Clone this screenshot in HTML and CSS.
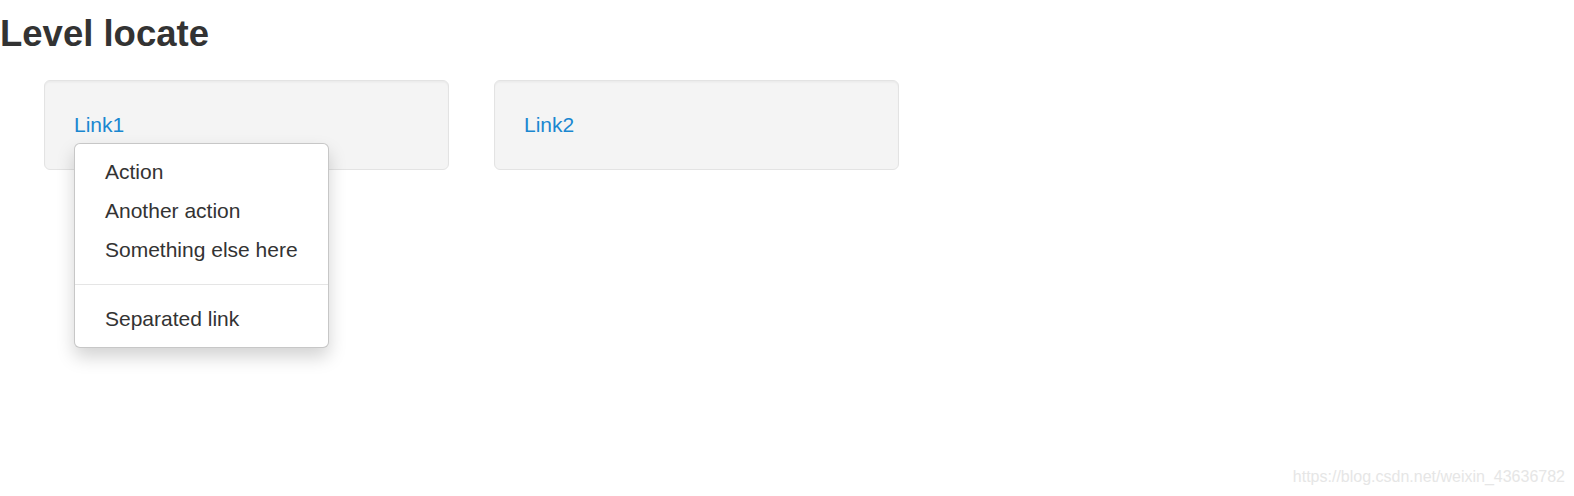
FILE: index.html
```html
<!DOCTYPE html>
<html>
<head>
<meta charset="utf-8">
<link rel="stylesheet" href="styles.css">
</head>
<body>
<h3 class="title">Level locate</h3>
<div class="row">
  <div class="well">
    <div class="dropdown">
      <a class="link" href="#">Link1</a>
      <ul class="menu">
        <li><a href="#">Action</a></li>
        <li><a href="#">Another action</a></li>
        <li><a href="#">Something else here</a></li>
        <li class="divider"></li>
        <li><a href="#">Separated link</a></li>
      </ul>
    </div>
  </div>
  <div class="well">
    <a class="link" href="#">Link2</a>
  </div>
</div>
<div class="watermark">https://blog.csdn.net/weixin_43636782</div>
</body>
</html>
```

FILE: styles.css
```css
html, body {
  margin: 0;
  padding: 0;
  background: #fff;
}
body {
  font-family: "Liberation Sans", Arial, sans-serif;
  font-size: 21px;
  line-height: 30px;
  color: #333;
  position: relative;
  width: 1574px;
  height: 496px;
  overflow: hidden;
}
.title {
  margin: 14px 0 0 0;
  font-size: 36.5px;
  line-height: 40px;
  font-weight: bold;
  color: #333;
}
.row {
  display: flex;
  gap: 45px;
  padding-left: 44px;
  margin-top: 26px;
}
.well {
  box-sizing: border-box;
  width: 405px;
  height: 90px;
  padding: 29px 29px 28px;
  background: #f4f4f4;
  border: 1.5px solid #e3e3e3;
  border-radius: 6px;
  box-shadow: inset 0 1.5px 1.5px rgba(0,0,0,0.04);
}
.dropdown {
  position: relative;
}
.link {
  color: #1a87d0;
  text-decoration: none;
}
.menu {
  position: absolute;
  top: 33px;
  left: 0;
  z-index: 10;
  margin: 0;
  padding: 8.5px 0;
  list-style: none;
  background: #fff;
  border: 1.5px solid rgba(0,0,0,0.22);
  border-radius: 6px;
  box-shadow: 0 9px 18px rgba(0,0,0,0.175);
  white-space: nowrap;
}
.menu a {
  display: block;
  padding: 4.5px 30px;
  line-height: 30px;
  color: #333;
  text-decoration: none;
}
.menu .divider {
  height: 1.5px;
  margin: 14px 0;
  background: #e5e5e5;
}
.watermark {
  position: absolute;
  top: 469px;
  right: 9px;
  font-size: 16px;
  line-height: 16px;
  color: #e6e6e6;
}
```
